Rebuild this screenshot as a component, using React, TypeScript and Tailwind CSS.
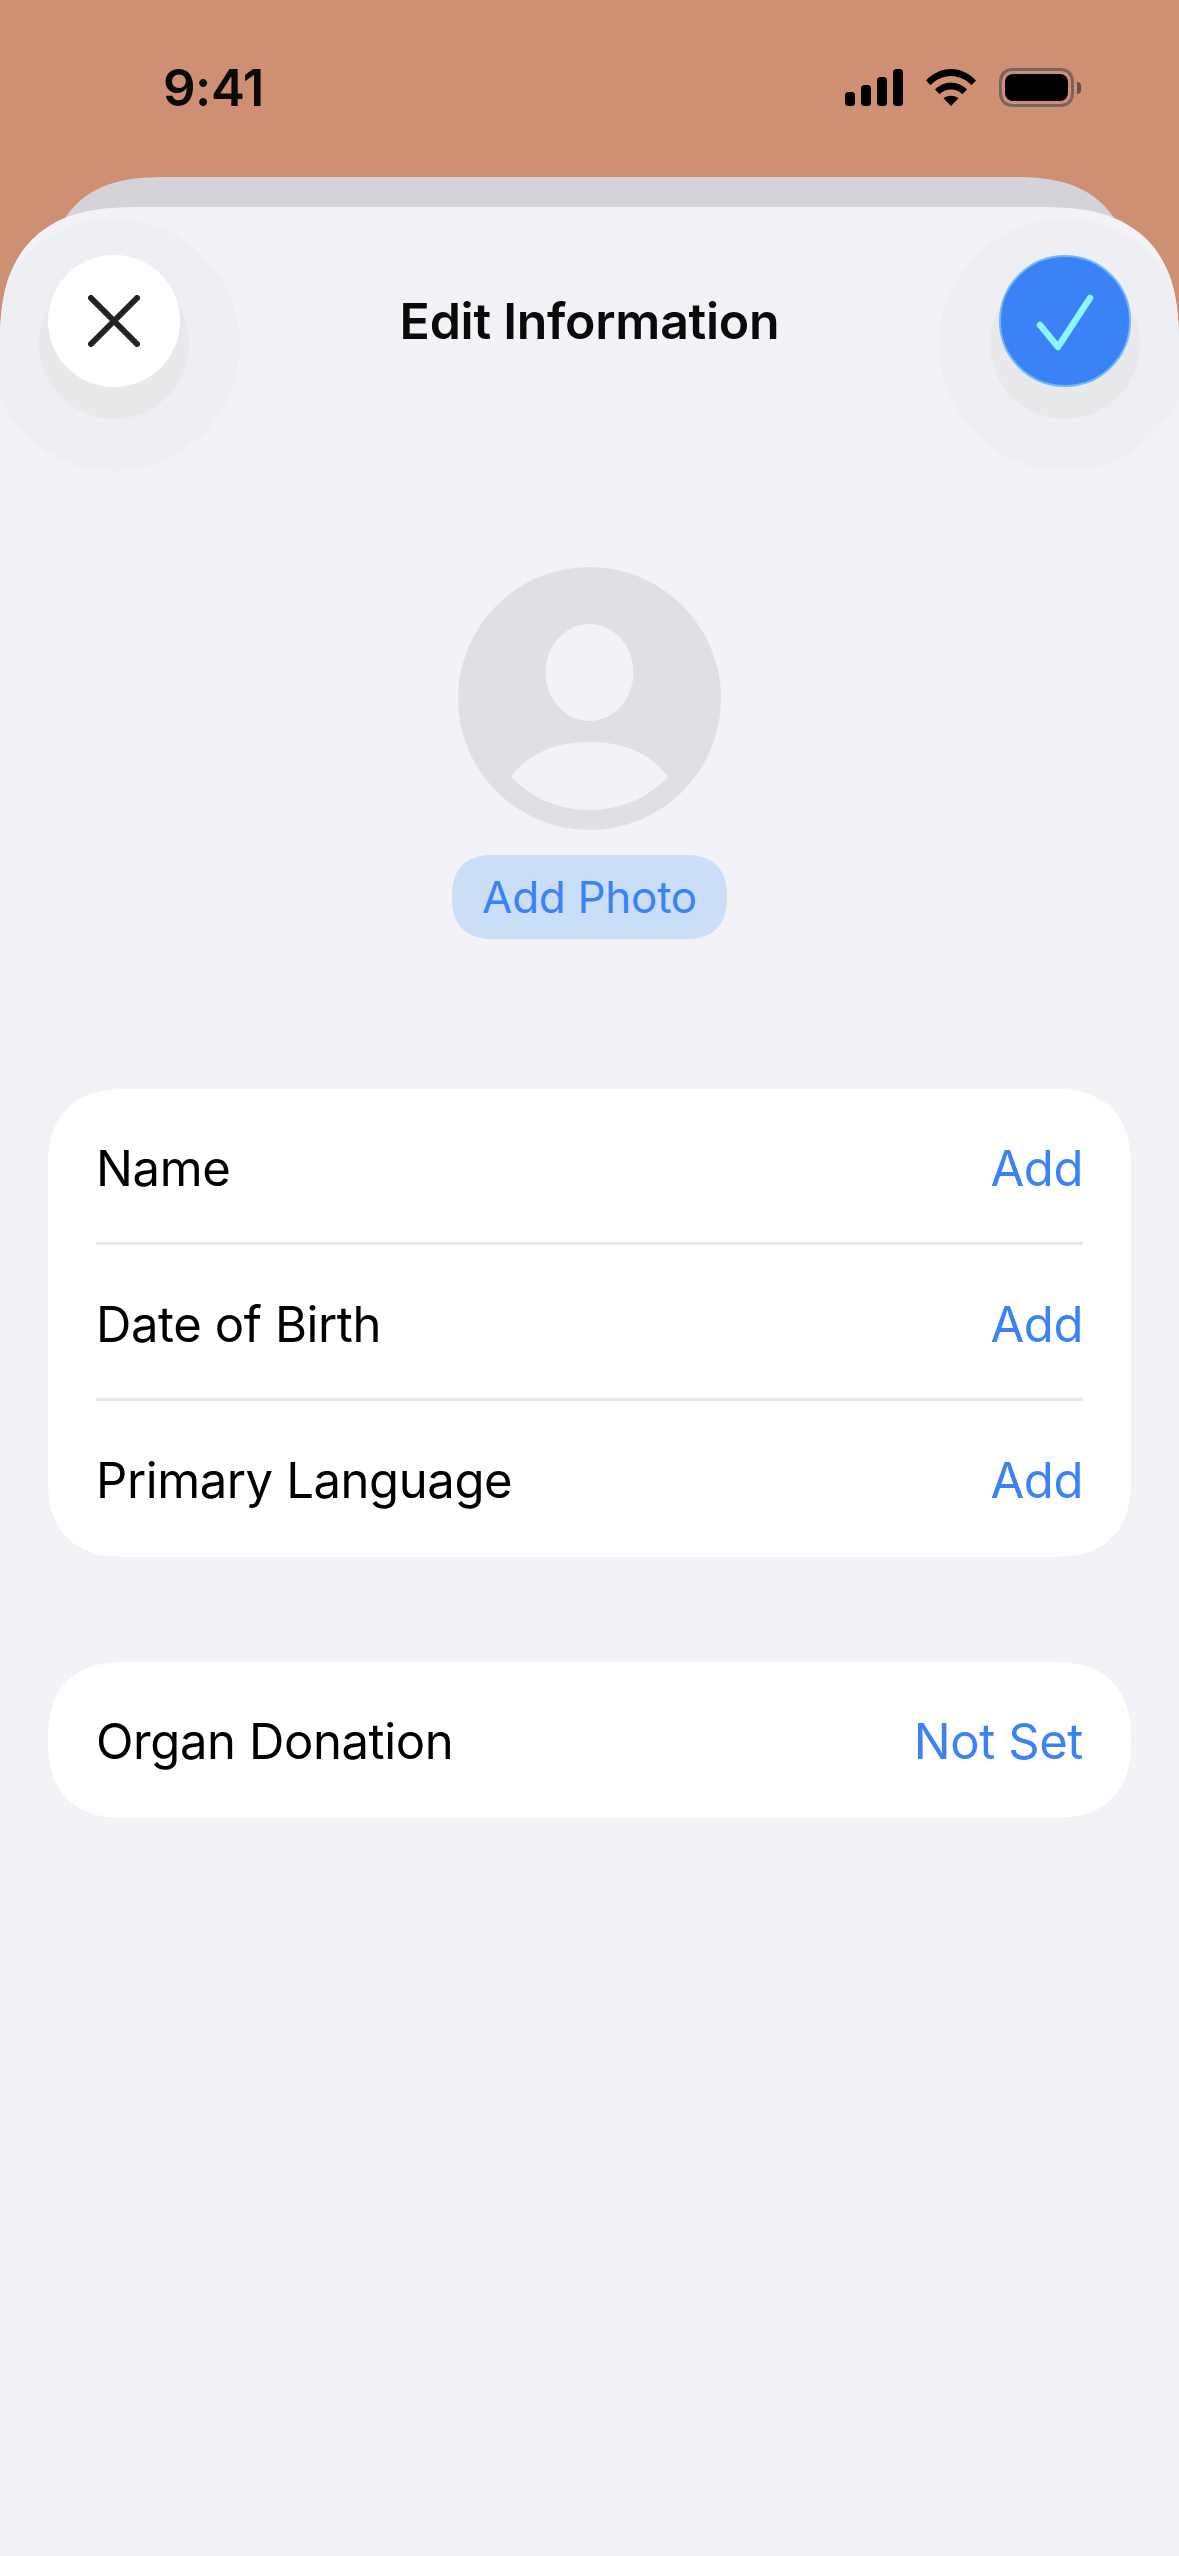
const font = { fontFamily: "Inter, 'Liberation Sans', sans-serif" };

function Signal() {
  return (
    <svg width="58" height="37" viewBox="0 0 58 37" fill="black">
      <rect x="0" y="23" width="10" height="14" rx="3.5" />
      <rect x="16" y="16" width="10" height="21" rx="3.5" />
      <rect x="32" y="8" width="10" height="29" rx="3.5" />
      <rect x="48" y="0" width="10" height="37" rx="3.5" />
    </svg>
  );
}

function Wifi() {
  return (
    <svg width="50" height="37" viewBox="0 0 50 37" fill="black">
      <path d="M0 11.5 C6.5 4.5 15.5 0 25 0 C34.5 0 43.5 4.5 50 11.5 L45.5 16.2 C40 10.5 33 7 25 7 C17 7 10 10.5 4.5 16.2 Z" />
      <path d="M9 20.5 C13 16.5 19 13.5 25 13.5 C31 13.5 37 16.5 41 20.5 L36.4 25.2 C33.5 22.4 29.5 20.5 25 20.5 C20.5 20.5 16.5 22.4 13.6 25.2 Z" />
      <path d="M17.5 29.3 C19.5 27.6 22 26.7 25 26.7 C28 26.7 30.5 27.6 32.5 29.3 L25 37 Z" />
    </svg>
  );
}

function Battery() {
  return (
    <div className="flex items-center">
      <div className="w-[75px] h-[39px] rounded-[13px] border-[3px] border-[#75665f] p-[3px]">
        <div className="w-full h-full rounded-[8px] bg-black"></div>
      </div>
      <div className="w-[4px] h-[12px] ml-[3px] rounded-r-[4px] bg-[#5f534d]"></div>
    </div>
  );
}

function Avatar() {
  return (
    <svg width="263" height="263" viewBox="0 0 263 263">
      <circle cx="131.5" cy="131.5" r="131.5" fill="#dfdfe5" />
      <ellipse cx="131.5" cy="105.5" rx="44" ry="48.5" fill="#f2f2f7" />
      <path d="M53 210 C70 186 98 175 131.5 175 C165 175 193 186 210 210 C190 231 162 243 131.5 243 C101 243 73 231 53 210 Z" fill="#f2f2f7" />
    </svg>
  );
}

function Row({ label, value, divider }: { label: string; value: string; divider?: boolean }) {
  return (
    <div className="flex flex-col">
      <div className="flex items-center justify-between h-[156px] pt-[3px] text-[49px] tracking-[-0.4px]">
        <span className="text-black">{label}</span>
        <span className="text-[#3b82f6]">{value}</span>
      </div>
      {divider && <div className="h-[3px] -mt-[3px] bg-[#e9e9ec]"></div>}
    </div>
  );
}

export default function App() {
  return (
    <div className="flex flex-col w-[1179px] h-[2556px] bg-[#cf8f73] overflow-hidden" style={font}>
      <div className="flex items-center justify-between h-[177px] shrink-0 pb-[2px] pl-[163px] pr-[98px]">
        <span className="text-[51px] font-semibold text-[#0a0a0a] leading-none tracking-[-0.5px]">9:41</span>
        <div className="flex items-center gap-[23px]">
          <Signal />
          <Wifi />
          <Battery />
        </div>
      </div>
      <div className="mx-[48px] h-[120px] shrink-0 bg-[#d4d3d9] rounded-t-[130px] [corner-shape:superellipse(1.4)]"></div>
      <div className="flex flex-col flex-1 -mt-[90px] bg-[#f2f2f7] rounded-t-[140px] [corner-shape:superellipse(1.4)] overflow-hidden">
        <div className="flex items-center justify-between pt-[48px] px-[48px]">
          <button className="flex items-center justify-center w-[132px] h-[132px] rounded-full bg-white shadow-[0_23px_0_9px_#e9e9ec,0_24px_0_60px_#eeeff3]">
            <svg width="52" height="52" viewBox="0 0 52 52" fill="none" stroke="#222222" strokeWidth="6" strokeLinecap="round">
              <path d="M3 3 L49 49 M49 3 L3 49" />
            </svg>
          </button>
          <h1 className="text-[50px] font-semibold text-[#0a0a0a] tracking-[-0.25px]">Edit Information</h1>
          <button className="flex items-center justify-center w-[132px] h-[132px] rounded-full bg-[#3b82f6] border-[2px] border-[#6cb8f8] shadow-[0_23px_0_9px_#e9e9ec,0_24px_0_60px_#eeeff3]">
            <svg width="60" height="60" viewBox="0 0 60 60" fill="none" stroke="#8cf6ff" strokeWidth="6.5" strokeLinecap="round" strokeLinejoin="round">
              <path d="M5 34 L23 56 L55 7" />
            </svg>
          </button>
        </div>

        <div className="flex flex-col items-center mt-[180px] gap-[25px]">
          <Avatar />
          <button className="flex items-center justify-center w-[275px] h-[84px] rounded-[42px] [corner-shape:superellipse(1.3)] bg-[#cbdef7] text-[#3b82f6] text-[44px] tracking-[-0.3px]">
            Add Photo
          </button>
        </div>

        <div className="mx-[48px] mt-[150px] px-[48px] bg-white rounded-[78px] [corner-shape:superellipse(1.3)]">
          <Row label="Name" value="Add" divider />
          <Row label="Date of Birth" value="Add" divider />
          <Row label="Primary Language" value="Add" />
        </div>

        <div className="mx-[48px] mt-[105px] px-[48px] bg-white rounded-[78px] [corner-shape:superellipse(1.3)]">
          <Row label="Organ Donation" value="Not Set" />
        </div>
      </div>
    </div>
  );
}
